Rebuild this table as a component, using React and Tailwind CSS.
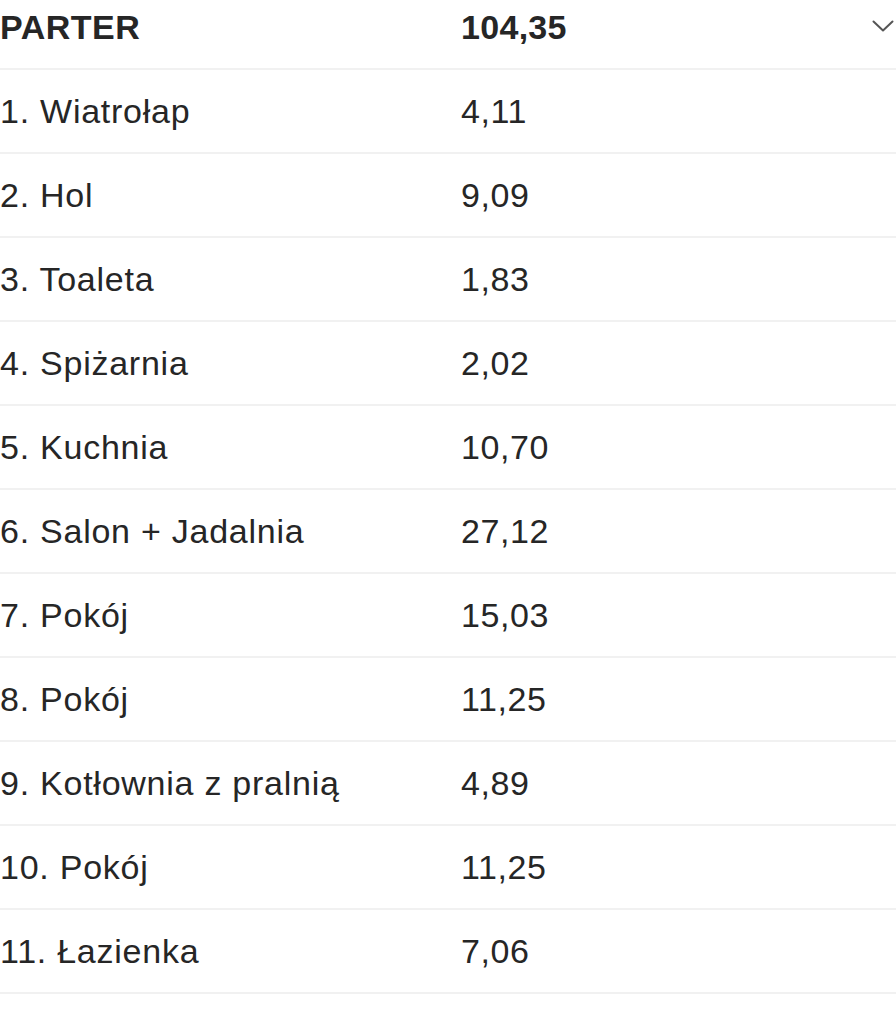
const ROOMS = [
  ["1. Wiatrołap", "4,11"],
  ["2. Hol", "9,09"],
  ["3. Toaleta", "1,83"],
  ["4. Spiżarnia", "2,02"],
  ["5. Kuchnia", "10,70"],
  ["6. Salon + Jadalnia", "27,12"],
  ["7. Pokój", "15,03"],
  ["8. Pokój", "11,25"],
  ["9. Kotłownia z pralnią", "4,89"],
  ["10. Pokój", "11,25"],
  ["11. Łazienka", "7,06"],
];

export default function App() {
  return (
    <div
      className="w-[896px] h-[1024px] bg-white overflow-hidden text-[#262626]"
      style={{ fontFamily: '"Liberation Sans", Arial, sans-serif' }}
    >
      {/* section header */}
      <div className="flex items-center h-[70px] pb-[14px] border-b-2 border-[#f1f1f1]">
        <div className="w-[461px] text-[34px] font-bold tracking-[0.5px]">PARTER</div>
        <div className="flex-1 text-[34px] font-bold tracking-[0.3px]">104,35</div>
        <svg width="22" height="12" viewBox="0 0 22 12" className="mr-[2px] mb-[2px]" fill="none">
          <polyline points="1.5,1.5 11,10.5 20.5,1.5" stroke="#555" strokeWidth="2" strokeLinecap="round" strokeLinejoin="round" />
        </svg>
      </div>

      {ROOMS.map(([name, area]) => (
        <div key={name + area} className="flex items-center h-[84px] border-b-2 border-[#f1f1f1]">
          <div className="w-[461px] text-[34px] tracking-[0.75px]">{name}</div>
          <div className="flex-1 text-[34px] tracking-[0.6px]">{area}</div>
        </div>
      ))}
    </div>
  );
}
